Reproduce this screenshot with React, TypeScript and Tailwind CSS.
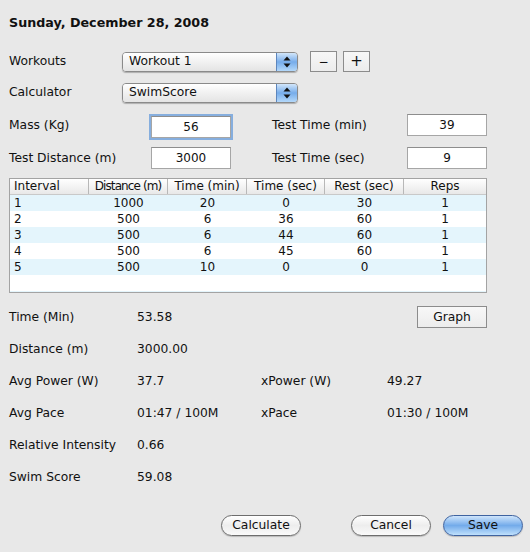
import React from "react";

function Arrows() {
  return (
    <svg width="8" height="12" viewBox="0 0 8 12">
      <path d="M4 0.5 L7.5 4.5 L0.5 4.5 Z" fill="#111" />
      <path d="M4 11.5 L7.5 7.5 L0.5 7.5 Z" fill="#111" />
    </svg>
  );
}

function Popup({ value }: { value: string }) {
  return (
    <div className="flex h-[20px] w-[176px] rounded-[4px] border border-[#8a8a8a] shadow-[0_1px_1px_rgba(0,0,0,0.25)] overflow-hidden">
      <div className="flex-1 flex items-center pl-[6px] bg-gradient-to-b from-[#ffffff] via-[#f1f1f1] to-[#e4e4e4] text-[12.3px] leading-none">
        {value}
      </div>
      <div className="w-[21px] flex items-center justify-center border-l border-[#5d86bd] bg-gradient-to-b from-[#d2e6fa] via-[#76acea] to-[#b3d8fa]">
        <Arrows />
      </div>
    </div>
  );
}

function Field({ value, focused }: { value: string; focused?: boolean }) {
  return (
    <div
      className={
        "w-[80px] h-[22px] bg-white flex items-center justify-center text-[12px] leading-none border border-[#a6a6a6] border-t-[#8d8d8d] " +
        (focused ? "shadow-[0_0_0_2px_#86aede] border-[#6e92c4]" : "")
      }
    >
      {value}
    </div>
  );
}

const rows = [
  ["1", "1000", "20", "0", "30", "1"],
  ["2", "500", "6", "36", "60", "1"],
  ["3", "500", "6", "44", "60", "1"],
  ["4", "500", "6", "45", "60", "1"],
  ["5", "500", "10", "0", "0", "1"],
];

const cols = "grid grid-cols-[79px_79px_79px_78px_79px_1fr]";

const pill =
  "shrink-0 w-[80px] h-[21px] rounded-full leading-none shadow-[0_1px_1px_rgba(0,0,0,0.2)] ";

export default function App() {
  return (
    <div className="w-[530px] h-[552px] bg-[#e8e8e8] text-[#111] font-['DejaVu_Sans',sans-serif] pl-[9px] pr-[43px] pt-[15px] flex flex-col">
      <div className="h-[16px] leading-[16px] text-[12.7px] font-bold">Sunday, December 28, 2008</div>

      <div className="mt-[20px] flex items-center h-[21px]">
        <div className="w-[113px] text-[12.3px]">Workouts</div>
        <Popup value="Workout 1" />
        <button className="ml-[12px] w-[27px] h-[21px] border border-[#8c8c8c] bg-gradient-to-b from-[#f7f7f7] to-[#ececec] flex items-center justify-center text-[12px] leading-none">
          −
        </button>
        <button className="ml-[6px] w-[27px] h-[21px] border border-[#8c8c8c] bg-gradient-to-b from-[#f7f7f7] to-[#ececec] flex items-center justify-center text-[15px] leading-none">
          +
        </button>
      </div>

      <div className="mt-[10px] flex items-center h-[21px]">
        <div className="w-[113px] text-[12.3px]">Calculator</div>
        <Popup value="SwimScore" />
      </div>

      <div className="mt-[13px] flex items-center h-[22px]">
        <div className="w-[142px] text-[12.3px] -mt-[3px]">Mass (Kg)</div>
        <Field value="56" focused />
        <div className="ml-[41px] w-[135px] text-[12.3px] -mt-[3px]">Test Time (min)</div>
        <div className="-mt-[4px]">
          <Field value="39" />
        </div>
      </div>

      <div className="mt-[9px] flex items-center h-[22px]">
        <div className="w-[142px] text-[12.3px]">Test Distance (m)</div>
        <Field value="3000" />
        <div className="ml-[41px] w-[135px] text-[12.3px]">Test Time (sec)</div>
        <Field value="9" />
      </div>

      <div className="mt-[9px] w-[478px] h-[115px] border border-[#a3a3a3] bg-white overflow-hidden text-[12px]">
        <div className={cols + " h-[16px] leading-[15px] bg-gradient-to-b from-[#ffffff] to-[#e8e8e8] border-b border-[#c9c9c9]"}>
          <div className="pl-[4px] border-r border-[#b8b8b8]">Interval</div>
          <div className="text-center border-r border-[#b8b8b8] tracking-[-0.9px]">Distance (m)</div>
          <div className="text-center border-r border-[#b8b8b8]">Time (min)</div>
          <div className="text-center border-r border-[#b8b8b8]">Time (sec)</div>
          <div className="text-center border-r border-[#b8b8b8]">Rest (sec)</div>
          <div className="text-center">Reps</div>
        </div>
        {rows.map((r, i) => (
          <div key={i} className={cols + " h-[16px] leading-[16px] " + (i % 2 === 0 ? "bg-[#e4f5fc]" : "bg-white")}>
            <div className="pl-[4px]">{r[0]}</div>
            <div className="text-center">{r[1]}</div>
            <div className="text-center">{r[2]}</div>
            <div className="text-center">{r[3]}</div>
            <div className="text-center">{r[4]}</div>
            <div className="text-center">{r[5]}</div>
          </div>
        ))}
        <div className="h-[16px] bg-white" />
        <div className="h-[16px] bg-[#e4f5fc]" />
      </div>

      <div className="mt-[8px] flex flex-col text-[12.3px]">
        <div className="h-[32px] flex items-center">
          <div className="w-[128px]">Time (Min)</div>
          <div>53.58</div>
          <button className="ml-auto w-[70px] h-[22px] border border-[#8c8c8c] bg-gradient-to-b from-[#f8f8f8] to-[#ececec] text-[12.3px] leading-none">
            Graph
          </button>
        </div>
        <div className="h-[32px] flex items-center">
          <div className="w-[128px]">Distance (m)</div>
          <div>3000.00</div>
        </div>
        <div className="h-[32px] flex items-center">
          <div className="w-[128px]">Avg Power (W)</div>
          <div className="w-[124px]">37.7</div>
          <div className="w-[126px]">xPower (W)</div>
          <div>49.27</div>
        </div>
        <div className="h-[32px] flex items-center">
          <div className="w-[128px]">Avg Pace</div>
          <div className="w-[124px]">01:47 / 100M</div>
          <div className="w-[126px]">xPace</div>
          <div>01:30 / 100M</div>
        </div>
        <div className="h-[32px] flex items-center">
          <div className="w-[128px]">Relative Intensity</div>
          <div>0.66</div>
        </div>
        <div className="h-[32px] flex items-center">
          <div className="w-[128px]">Swim Score</div>
          <div>59.08</div>
        </div>
      </div>

      <div className="mt-[22px] -mr-[43px] flex items-center pl-[212px] text-[12.3px]">
        <button className={pill + "border border-[#6d6d6d] bg-gradient-to-b from-[#ffffff] via-[#ededed] to-[#fafafa]"}>
          Calculate
        </button>
        <button className={pill + "ml-[50px] border border-[#6d6d6d] bg-gradient-to-b from-[#ffffff] via-[#ededed] to-[#fafafa]"}>
          Cancel
        </button>
        <button className={pill + "ml-[12px] border border-[#3f63a0] bg-gradient-to-b from-[#cfe5fb] via-[#73abea] to-[#bfe0fc]"}>
          Save
        </button>
      </div>
    </div>
  );
}
